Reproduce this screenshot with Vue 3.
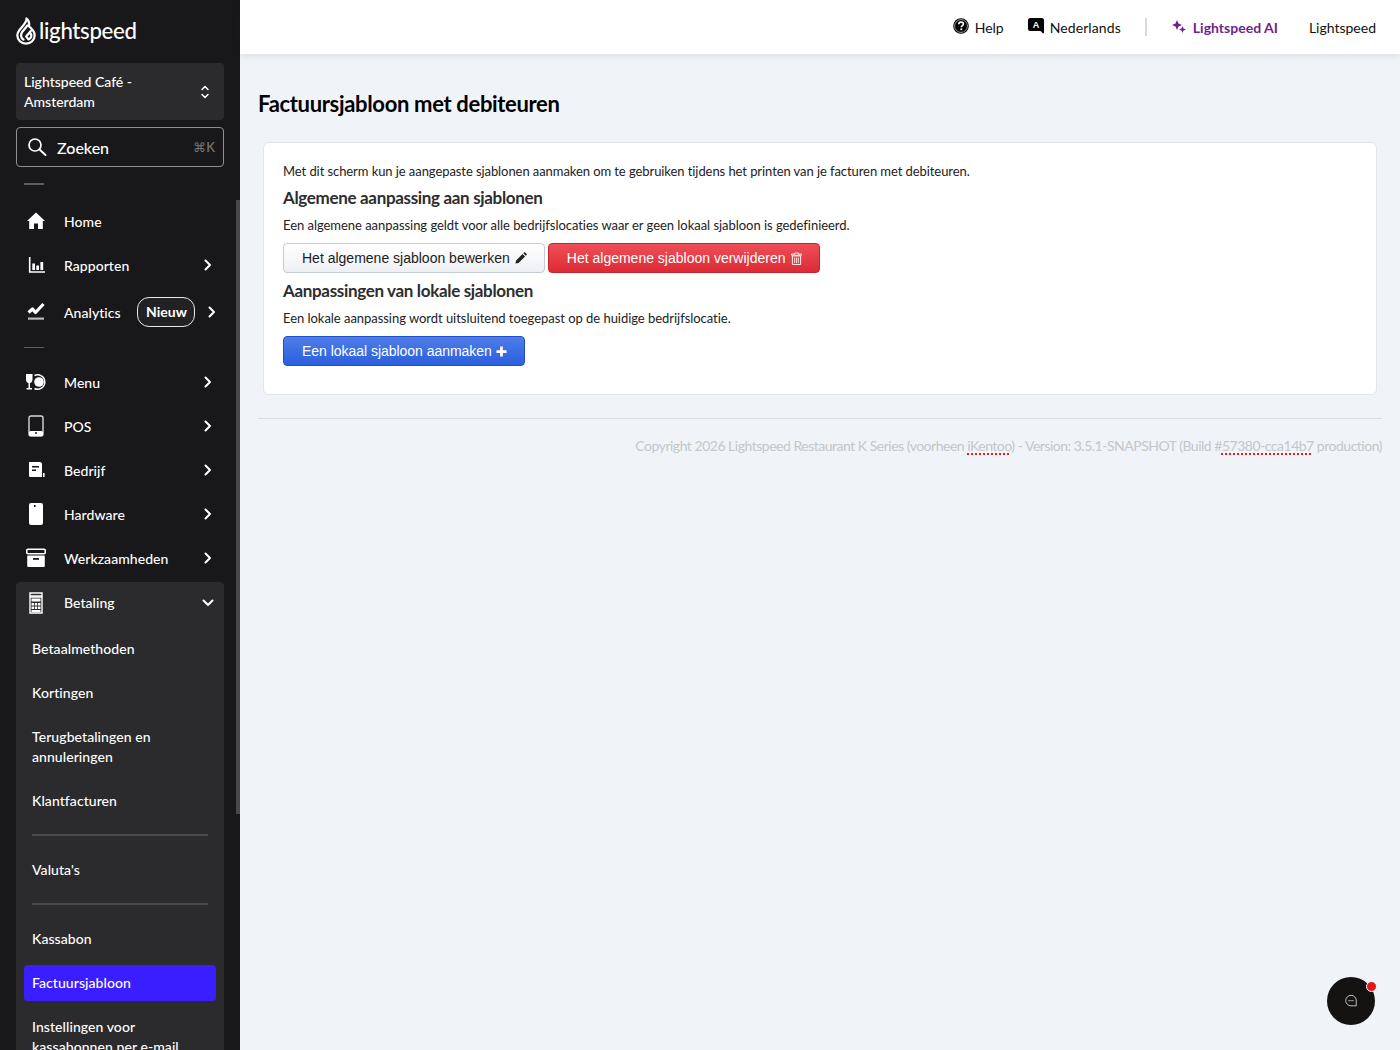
<script setup>
const topItems = [
  { label: 'Home', icon: 'home', chevron: false },
  { label: 'Rapporten', icon: 'chart', chevron: true }
]
const midItems = [
  { label: 'Menu', icon: 'menu' },
  { label: 'POS', icon: 'pos' },
  { label: 'Bedrijf', icon: 'company' },
  { label: 'Hardware', icon: 'hardware' },
  { label: 'Werkzaamheden', icon: 'box' }
]
</script>

<template>
  <div class="app">
    <aside class="sidebar">
      <div class="scrollbar"></div>
      <div class="logo">
        <svg class="logo-mark" viewBox="0 0 20 28" width="20" height="28">
          <path d="M10.5 1.5 C11 4.5 9 6.5 5.5 10.5 C3 13.3 1.3 15.5 1.3 18.2 C1.3 23 5.2 26.7 10 26.7 C14.8 26.7 18.7 23 18.7 18.2 C18.7 15.2 17.2 13.3 15.3 11.5 L13 9.3 C13.6 6 12.8 3.3 10.5 1.5 Z" fill="none" stroke="#fff" stroke-width="2.2" stroke-linejoin="round"/>
          <path d="M11.5 8.5 L6.5 14.5 C4.3 17.2 4.6 20.5 7.5 22.6 M14.8 14 L10.2 19.6 L12.6 22.4 C14.8 21.5 16.2 18.6 14.8 16.8" fill="none" stroke="#fff" stroke-width="2.3" stroke-linecap="round" stroke-linejoin="round"/>
        </svg>
        <span class="logo-text">lightspeed</span>
      </div>

      <div class="location">
        <span>Lightspeed Café -<br />Amsterdam</span>
        <svg viewBox="0 0 10 16" width="10" height="16">
          <path d="M2 5.5 L5 2.5 L8 5.5 M2 10.5 L5 13.5 L8 10.5" fill="none" stroke="#fff" stroke-width="1.5" stroke-linecap="round" stroke-linejoin="round"/>
        </svg>
      </div>

      <div class="search">
        <svg viewBox="0 0 20 20" width="20" height="20">
          <circle cx="8" cy="8" r="6" fill="none" stroke="#fff" stroke-width="1.7"/>
          <path d="M12.5 12.5 L18.5 18" stroke="#fff" stroke-width="2" stroke-linecap="round"/>
        </svg>
        <span class="search-label">Zoeken</span>
        <span class="search-key">⌘K</span>
      </div>

      <div class="short-rule first"></div>

      <nav class="nav">
        <div v-for="item in topItems" :key="item.label" class="nav-row">
          <span class="nav-icon">
            <svg v-if="item.icon === 'home'" viewBox="0 0 20 20" width="20" height="20">
              <path d="M10 1.5 L19 10 L16.8 10 L16.8 18 L12 18 L12 12.5 L8 12.5 L8 18 L3.2 18 L3.2 10 L1 10 Z" fill="#fff"/>
            </svg>
            <svg v-else viewBox="0 0 20 20" width="20" height="20">
              <path d="M3.7 2 L3.7 17 L19 17" fill="none" stroke="#fff" stroke-width="1.6"/>
              <path d="M6.3 8.5 H9 V15 H6.3 Z M10.3 10.5 H13 V15 H10.3 Z M14.4 7 H17.2 V15 H14.4 Z" fill="#fff"/>
            </svg>
          </span>
          <span class="nav-label">{{ item.label }}</span>
          <svg v-if="item.chevron" class="chev" viewBox="0 0 10 14" width="10" height="14">
            <path d="M2.5 2.5 L7 7 L2.5 11.5" fill="none" stroke="#fff" stroke-width="2" stroke-linecap="round" stroke-linejoin="round"/>
          </svg>
        </div>

        <div class="nav-row analytics">
          <span class="nav-icon">
            <svg viewBox="0 0 20 20" width="20" height="20">
              <path d="M2.5 10.5 L6.5 7 L9.5 10.5 L17.5 2" fill="none" stroke="#fff" stroke-width="3.2" stroke-linejoin="round"/>
              <rect x="2" y="15.5" width="16" height="2.2" fill="#b9b9bb"/>
            </svg>
          </span>
          <span class="nav-label">Analytics</span>
          <span class="badge">Nieuw</span>
          <svg class="chev badge-chev" viewBox="0 0 10 14" width="10" height="14">
            <path d="M2.5 2.5 L7 7 L2.5 11.5" fill="none" stroke="#fff" stroke-width="2" stroke-linecap="round" stroke-linejoin="round"/>
          </svg>
        </div>

        <div class="short-rule second"></div>

        <div v-for="item in midItems" :key="item.label" class="nav-row">
          <span class="nav-icon">
            <svg v-if="item.icon === 'menu'" viewBox="0 0 22 20" width="22" height="20">
              <path d="M1 2 H7.5 V7.5 C7.5 10 6 11 5 11 V16 H7 V17.5 H1.5 V16 H3.5 V11 C2.5 11 1 10 1 7.5 Z" fill="#fff"/>
              <path d="M9.5 3.5 A7.2 7.2 0 1 1 9.5 16.5" fill="none" stroke="#fff" stroke-width="1.5"/>
              <circle cx="14" cy="10" r="4.8" fill="#fff"/>
            </svg>
            <svg v-else-if="item.icon === 'pos'" viewBox="0 0 20 22" width="20" height="22">
              <rect x="3" y="1" width="14" height="20" rx="2" fill="none" stroke="#d8d8d8" stroke-width="1.4"/>
              <rect x="3" y="16" width="14" height="5" rx="1.5" fill="#fff"/>
              <circle cx="10" cy="18" r="1" fill="#18181a"/>
            </svg>
            <svg v-else-if="item.icon === 'company'" viewBox="0 0 20 20" width="20" height="20">
              <path d="M3 2 H14 C15 2 16 3 16 4 V17 H4.5 C3.5 17 3 16.5 3 15.5 Z" fill="#fff"/>
              <rect x="6" y="6" width="7" height="1.5" fill="#18181a"/>
              <rect x="6" y="9.5" width="4" height="1.5" fill="#18181a"/>
              <rect x="17" y="13" width="1.6" height="4" fill="#fff"/>
            </svg>
            <svg v-else-if="item.icon === 'hardware'" viewBox="0 0 20 24" width="20" height="24">
              <rect x="3" y="1" width="14" height="22" rx="2" fill="#fff"/>
              <rect x="8" y="3" width="1.6" height="2" fill="#18181a"/>
            </svg>
            <svg v-else viewBox="0 0 22 22" width="22" height="22">
              <rect x="1.8" y="2.2" width="18.4" height="4.6" rx="1" fill="none" stroke="#fff" stroke-width="1.6"/>
              <rect x="2.2" y="8.5" width="17.6" height="11.5" rx="1" fill="#fff"/>
              <rect x="8" y="11" width="6" height="1.8" fill="#18181a"/>
            </svg>
          </span>
          <span class="nav-label">{{ item.label }}</span>
          <svg class="chev" viewBox="0 0 10 14" width="10" height="14">
            <path d="M2.5 2.5 L7 7 L2.5 11.5" fill="none" stroke="#fff" stroke-width="2" stroke-linecap="round" stroke-linejoin="round"/>
          </svg>
        </div>

        <div class="group">
          <div class="nav-row group-head">
            <span class="nav-icon">
              <svg viewBox="0 0 20 24" width="20" height="24">
                <path d="M4 2 H16 V5 H4 Z" fill="none" stroke="#fff" stroke-width="1.4"/>
                <path d="M4 6 H16 V22 H4 Z" fill="none" stroke="#fff" stroke-width="1.4"/>
                <path d="M5.5 7.5 H14.5 V10.5 H5.5 Z M5.5 12 H8 V14.5 H5.5 Z M8.8 12 H11.2 V14.5 H8.8 Z M12 12 H14.5 V14.5 H12 Z M5.5 15.5 H8 V18 H5.5 Z M8.8 15.5 H11.2 V18 H8.8 Z M12 15.5 H14.5 V18 H12 Z M5.5 19 H14.5 V21 H5.5 Z" fill="#fff"/>
              </svg>
            </span>
            <span class="nav-label">Betaling</span>
            <svg class="chev-down" viewBox="0 0 14 10" width="14" height="10">
              <path d="M2.5 2.5 L7 7 L11.5 2.5" fill="none" stroke="#fff" stroke-width="2" stroke-linecap="round" stroke-linejoin="round"/>
            </svg>
          </div>
          <a class="sub">Betaalmethoden</a>
          <a class="sub">Kortingen</a>
          <a class="sub multi">Terugbetalingen en<br />annuleringen</a>
          <a class="sub">Klantfacturen</a>
          <div class="sub-rule"></div>
          <a class="sub">Valuta's</a>
          <div class="sub-rule"></div>
          <a class="sub">Kassabon</a>
          <a class="sub active">Factuursjabloon</a>
          <a class="sub multi">Instellingen voor<br />kassabonnen per e-mail</a>
        </div>
      </nav>
    </aside>

    <div class="main">
      <header class="topbar">
        <span class="top-item help">
          <svg viewBox="0 0 16 16" width="16" height="16">
            <circle cx="8" cy="8" r="7.8" fill="#000"/>
            <circle cx="8" cy="8" r="6.4" fill="none" stroke="#fff" stroke-width="0.6"/>
            <path d="M5.8 6.2 C5.8 4.8 6.9 4.1 8.1 4.1 C9.4 4.1 10.4 4.9 10.4 6.1 C10.4 7.7 8.3 7.7 8.3 9.3" fill="none" stroke="#fff" stroke-width="1.6"/>
            <rect x="7.4" y="10.4" width="1.8" height="1.8" fill="#fff"/>
          </svg>
          Help
        </span>
        <span class="top-item lang">
          <svg viewBox="0 0 16 16" width="16" height="16">
            <path d="M2 0 H14 C15 0 16 1 16 2 V14.5 C16 15.5 15 15.5 14.5 15 L12.5 13 H2 C1 13 0 12 0 11 V2 C0 1 1 0 2 0 Z" fill="#000"/>
            <text x="8" y="10" text-anchor="middle" fill="#fff" class="lang-a">A</text>
          </svg>
          Nederlands
        </span>
        <span class="top-sep"></span>
        <span class="top-item ai">
          <svg viewBox="0 0 14 14" width="14" height="14">
            <path d="M5 1 L6.5 4.5 L10 6 L6.5 7.5 L5 11 L3.5 7.5 L0 6 L3.5 4.5 Z" fill="#6f1f8f"/>
            <path d="M10.5 7 L11.5 9.5 L14 10.5 L11.5 11.5 L10.5 14 L9.5 11.5 L7 10.5 L9.5 9.5 Z" fill="#6f1f8f"/>
          </svg>
          Lightspeed AI
        </span>
        <span class="top-item plain">Lightspeed</span>
      </header>

      <main class="content">
        <h1>Factuursjabloon met debiteuren</h1>
        <section class="card">
          <p class="intro">Met dit scherm kun je aangepaste sjablonen aanmaken om te gebruiken tijdens het printen van je facturen met debiteuren.</p>
          <h2>Algemene aanpassing aan sjablonen</h2>
          <p>Een algemene aanpassing geldt voor alle bedrijfslocaties waar er geen lokaal sjabloon is gedefinieerd.</p>
          <div class="btn-row spaced">
            <button class="btn btn-default">Het algemene sjabloon bewerken
              <svg viewBox="0 0 14 14" width="12" height="12"><path d="M0.5 13.5 L1.3 9.8 L8.8 2.3 L11.7 5.2 L4.2 12.7 Z M9.7 1.4 L10.6 0.5 C11 0.2 11.5 0.2 11.9 0.5 L13.5 2.1 C13.8 2.5 13.8 3 13.5 3.4 L12.6 4.3 Z" fill="#222"/></svg>
            </button>
            <button class="btn btn-danger">Het algemene sjabloon verwijderen
              <svg viewBox="0 0 12 14" width="11" height="13"><path d="M4 1 H8 V2.2 H11.5 V3.4 H0.5 V2.2 H4 Z M1.5 4.2 H10.5 V13.5 H1.5 Z" fill="none" stroke="#fff" stroke-width="1"/><path d="M4 6 V12 M6 6 V12 M8 6 V12" stroke="#fff" stroke-width="0.9"/></svg>
            </button>
          </div>
          <h2>Aanpassingen van lokale sjablonen</h2>
          <p>Een lokale aanpassing wordt uitsluitend toegepast op de huidige bedrijfslocatie.</p>
          <div class="btn-row">
            <button class="btn btn-primary">Een lokaal sjabloon aanmaken
              <svg viewBox="0 0 12 12" width="11" height="11"><path d="M4.5 0.5 H7.5 V4.5 H11.5 V7.5 H7.5 V11.5 H4.5 V7.5 H0.5 V4.5 H4.5 Z" fill="#fff"/></svg>
            </button>
          </div>
        </section>
        <footer class="footer">
          Copyright 2026 Lightspeed Restaurant K Series (voorheen <span class="spell">iKentoo</span>) - Version: 3.5.1-SNAPSHOT (Build #<span class="spell">57380-cca14b7</span> production)
        </footer>
      </main>
    </div>

    <div class="chat">
      <svg viewBox="0 0 16 16" width="14" height="14">
        <path d="M8 1.5 A6 6 0 1 0 8 13.5 H14 V8 A6 6 0 0 0 8 1.5 Z" fill="none" stroke="#d8d8d8" stroke-width="1"/>
        <path d="M5.2 7.5 H6.4 M7.4 7.5 H8.6 M9.6 7.5 H10.8" stroke="#d8d8d8" stroke-width="1.4"/>
      </svg>
      <span class="chat-dot"></span>
    </div>
  </div>
</template>

<style>
html, body { margin: 0; padding: 0; background: #f0f4f8; }
</style>

<style scoped>
.app {
  display: flex;
  height: 1050px;
  overflow: hidden;
  font-family: Lato, "Liberation Sans", sans-serif;
  position: relative;
  background: #f0f4f8;
}
.sidebar {
  width: 240px;
  flex: none;
  height: 1050px;
  overflow: hidden;
  background: #18181a;
  color: #fff;
  box-sizing: border-box;
  padding: 0 16px;
  position: relative;
}
.scrollbar {
  position: absolute;
  right: 0;
  top: 200px;
  width: 4px;
  height: 614px;
  background: #48484a;
}
.logo {
  height: 63px;
  display: flex;
  align-items: center;
  gap: 3px;
  box-sizing: border-box;
  padding-bottom: 2px;
}
.logo-mark { flex: none; }
.logo-text {
  font-size: 22.2px;
  font-weight: 500;
  letter-spacing: -0.3px;
  line-height: 28px;
}
.location {
  height: 57px;
  background: #2b2b2d;
  border-radius: 4px;
  display: flex;
  align-items: center;
  justify-content: space-between;
  box-sizing: border-box;
  padding: 0 14px 0 8px;
  font-size: 14px;
  line-height: 20px;
  font-weight: 500;
}
.search {
  margin-top: 7px;
  height: 40px;
  box-sizing: border-box;
  border: 1px solid #8e8e90;
  border-radius: 4px;
  display: flex;
  align-items: center;
  padding: 0 8px 0 10px;
}
.search-label {
  margin-left: 10px;
  font-size: 16px;
  font-weight: 500;
  flex: 1;
}
.search-key { font-size: 13px; color: #77777a; font-weight: 500; }
.short-rule { width: 20px; height: 1px; background: #5f5f61; margin-left: 8px; }
.short-rule.first { margin-top: 16px; height: 2px; }
.short-rule.second { margin-top: 10px; margin-bottom: 12px; }
.nav { margin-top: 14px; display: flex; flex-direction: column; }
.nav-row {
  height: 44px;
  display: flex;
  align-items: center;
  font-size: 14px;
  font-weight: 500;
  letter-spacing: 0.05px;
}
.nav-row.analytics { height: 50px; }
.nav-icon {
  width: 40px;
  flex: none;
  display: flex;
  justify-content: center;
  margin-right: 8px;
}
.nav-label { flex: 1; }
.chev { margin-right: 11px; flex: none; }
.badge {
  box-sizing: border-box;
  height: 30px;
  line-height: 28px;
  padding: 0 7px 0 8px;
  border: 1px solid #e8e8e8;
  border-radius: 12px;
  font-size: 14px;
  font-weight: 700;
  background: #222224;
  margin-right: 12px;
}
.badge-chev { margin-right: 7px; }
.group {
  background: #2b2b2d;
  border-radius: 4px;
  margin-top: 2px;
  padding-bottom: 20px;
  display: flex;
  flex-direction: column;
}
.group-head { height: 41px; }
.chev-down { margin-right: 9px; }
.sub {
  display: flex;
  align-items: center;
  height: 36px;
  margin: 4px 8px;
  padding: 0 8px;
  font-size: 14px;
  font-weight: 500;
  letter-spacing: 0.07px;
  line-height: 20px;
  border-radius: 4px;
}
.group-head + .sub { margin-top: 8px; }
.sub.multi { height: 56px; }
.sub.active { background: #3a1eff; }
.sub-rule {
  height: 2px;
  background: #4a4a4c;
  margin: 11px 16px 12px;
}
.main { flex: 1; min-width: 0; display: flex; flex-direction: column; }
.topbar {
  height: 54px;
  background: #fff;
  box-shadow: 0 1px 8px rgba(30, 40, 60, 0.12);
  display: flex;
  align-items: center;
  justify-content: flex-end;
  font-size: 14px;
  padding-right: 24px;
  color: #111;
  position: relative;
}
.top-item { display: inline-flex; align-items: center; gap: 6px; }
.top-item svg { margin-top: -2px; }
.lang { margin-left: 24px; letter-spacing: 0.1px; }
.lang-a { font: 700 9px "Liberation Sans", sans-serif; }
.top-sep { width: 2px; height: 18px; background: #d5d9e0; margin: 0 25px 0 24px; }
.ai { color: #6f1f8f; font-weight: 700; gap: 7px; }
.plain { margin-left: 31px; }
.content { padding: 0 18px; }
h1 {
  font-size: 22px;
  font-weight: 700;
  letter-spacing: -0.33px;
  color: #000;
  margin: 35px 0 23px;
  line-height: 30px;
}
.card {
  margin-right: 5px;
  margin-left: 5px;
  background: #fff;
  border: 1px solid #e1e5ea;
  border-radius: 6px;
  box-sizing: border-box;
  height: 253px;
  padding: 18px 19px;
  color: #222;
}
p { margin: 0; font-size: 13px; line-height: 20px; letter-spacing: -0.04px; }
p.intro { letter-spacing: -0.075px; }
h2 {
  margin: 6px 0 6px;
  font-size: 17px;
  line-height: 22px;
  font-weight: 700;
  letter-spacing: -0.33px;
  color: #2d2d2f;
}
.btn-row { display: flex; gap: 3px; margin-top: 8px; }
.btn-row.spaced { margin-bottom: 7px; }
.btn {
  height: 30px;
  box-sizing: border-box;
  border-radius: 4px;
  font: 14px/18px "Liberation Sans", Arial, sans-serif;
  padding: 0 17px 0 18px;
  display: inline-flex;
  align-items: center;
  gap: 5px;
  white-space: nowrap;
}
.btn-default {
  background: linear-gradient(#fff, #eef1f4);
  border: 1px solid #c6ccd3;
  color: #1c1c1c;
}
.btn-danger {
  background: linear-gradient(#ef4f58, #dc2a35);
  border: 1px solid #c9242e;
  color: #fff;
}
.btn-primary {
  background: linear-gradient(#4f7ce8, #2a5fdd);
  border: 1px solid #1f4fc8;
  color: #fff;
  gap: 4px;
  letter-spacing: -0.03px;
}
.footer {
  border-top: 1px solid #dbe0e5;
  margin-top: 23px;
  padding-top: 17px;
  text-align: right;
  font-size: 14px;
  line-height: 20px;
  letter-spacing: -0.49px;
  color: #c3c7cc;
  white-space: nowrap;
}
.spell {
  text-decoration: underline dotted #e0201c;
  text-decoration-thickness: 1.5px;
  text-underline-offset: 2px;
}
.chat {
  position: absolute;
  left: 1327px;
  top: 977px;
  width: 48px;
  height: 48px;
  border-radius: 50%;
  background: #141311;
  display: flex;
  align-items: center;
  justify-content: center;
}
.chat-dot {
  position: absolute;
  top: 3.5px;
  right: -1.5px;
  width: 9px;
  height: 9px;
  background: #e8141c;
  border: 1px solid #fff;
  border-radius: 50%;
}
</style>
